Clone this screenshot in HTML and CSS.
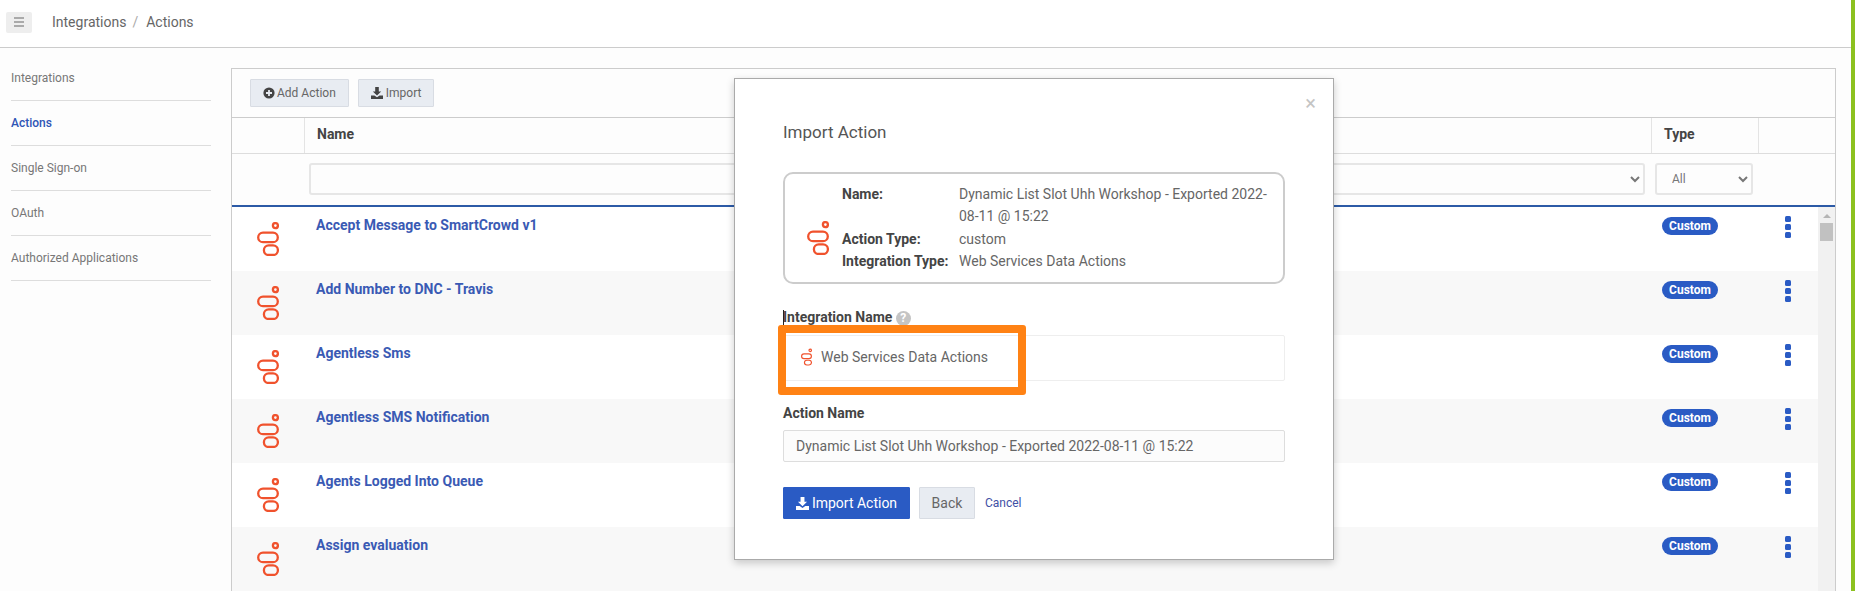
FILE: index.html
```html
<!DOCTYPE html>
<html lang="en">
<head>
    <meta charset="UTF-8">
    <title>Integrations / Actions</title>
    <link rel="stylesheet" href="styles.css">
</head>
<body>

    <svg class="defs" width="0" height="0">
        <symbol id="logo" viewBox="0 0 22 34">
            <g fill="none" stroke="#f0522d" stroke-width="2.3">
                <circle cx="18.4" cy="3.6" r="2.5"/>
                <rect x="1.2" y="10.6" width="19.6" height="9.6" rx="4.8"/>
                <rect x="6.9" y="23.4" width="14" height="9.6" rx="4.8"/>
            </g>
        </symbol>
        <symbol id="download" viewBox="0 0 12 12">
            <path d="M4.2 0h3.6v4.4h2.4L6 8.6 1.8 4.4h2.4z" fill="currentColor"/>
            <path d="M0 8.4h3.4L6 10.2l2.6-1.8H12V12H0z" fill="currentColor"/>
        </symbol>
    </svg>

    <div id="app">
        <header id="topbar">
            <button class="menu-toggle">
                <span></span><span></span><span></span>
            </button>
            <span class="crumb">Integrations</span>
            <span class="crumb-sep">/</span>
            <span class="crumb">Actions</span>
        </header>

        <div id="main">
            <nav id="sidenav">
                <a href="#">Integrations</a>
                <a href="#" class="active">Actions</a>
                <a href="#">Single Sign-on</a>
                <a href="#">OAuth</a>
                <a href="#">Authorized Applications</a>
            </nav>

            <section id="panel">
                <div class="toolbar">
                    <button class="btn-light">
                        <svg class="btn-icon" viewBox="0 0 12 12"><circle cx="6" cy="6" r="5.6" fill="currentColor"/><path d="M6 3v6M3 6h6" stroke="#e8ecf2" stroke-width="1.8"/></svg>
                        Add Action
                    </button>
                    <button class="btn-light">
                        <svg class="btn-icon"><use href="#download"/></svg>
                        Import
                    </button>
                </div>

                <div class="table-row table-head">
                    <div></div>
                    <div class="th">Name</div>
                    <div class="th">Type</div>
                    <div></div>
                </div>

                <div class="table-row table-filter">
                    <div></div>
                    <div class="filter-cell">
                        <input type="text" class="filter-input">
                        <select class="filter-select"><option></option></select>
                    </div>
                    <div class="filter-cell">
                        <select class="filter-select type-select"><option>All</option></select>
                    </div>
                    <div></div>
                </div>

                <div class="table-body">
                    <div class="rows">
                        <div class="row">
                            <svg class="row-logo"><use href="#logo"/></svg>
                            <a href="#" class="row-name">Accept Message to SmartCrowd v1</a>
                            <div><span class="badge">Custom</span></div>
                            <div class="kebab"><i></i><i></i><i></i></div>
                        </div>
                        <div class="row">
                            <svg class="row-logo"><use href="#logo"/></svg>
                            <a href="#" class="row-name">Add Number to DNC - Travis</a>
                            <div><span class="badge">Custom</span></div>
                            <div class="kebab"><i></i><i></i><i></i></div>
                        </div>
                        <div class="row">
                            <svg class="row-logo"><use href="#logo"/></svg>
                            <a href="#" class="row-name">Agentless Sms</a>
                            <div><span class="badge">Custom</span></div>
                            <div class="kebab"><i></i><i></i><i></i></div>
                        </div>
                        <div class="row">
                            <svg class="row-logo"><use href="#logo"/></svg>
                            <a href="#" class="row-name">Agentless SMS Notification</a>
                            <div><span class="badge">Custom</span></div>
                            <div class="kebab"><i></i><i></i><i></i></div>
                        </div>
                        <div class="row">
                            <svg class="row-logo"><use href="#logo"/></svg>
                            <a href="#" class="row-name">Agents Logged Into Queue</a>
                            <div><span class="badge">Custom</span></div>
                            <div class="kebab"><i></i><i></i><i></i></div>
                        </div>
                        <div class="row">
                            <svg class="row-logo"><use href="#logo"/></svg>
                            <a href="#" class="row-name">Assign evaluation</a>
                            <div><span class="badge">Custom</span></div>
                            <div class="kebab"><i></i><i></i><i></i></div>
                        </div>
                    </div>
                    <div class="scrollbar">
                        <div class="scroll-arrow"></div>
                        <div class="scroll-thumb"></div>
                    </div>
                </div>
            </section>
        </div>
    </div>

    <div id="modal">
        <span class="modal-close">&times;</span>
        <h2>Import Action</h2>

        <div class="info-box">
            <svg class="info-logo"><use href="#logo"/></svg>
            <dl class="info-list">
                <dt>Name:</dt>
                <dd>Dynamic List Slot Uhh Workshop - Exported 2022-<br>08-11 @ 15:22</dd>
                <dt>Action Type:</dt>
                <dd>custom</dd>
                <dt>Integration Type:</dt>
                <dd>Web Services Data Actions</dd>
            </dl>
        </div>

        <label class="field-label first-label"><span class="caret"></span>Integration Name <span class="help">?</span></label>
        <div class="integration-field">
            <svg class="field-logo"><use href="#logo"/></svg>
            Web Services Data Actions
            <div class="highlight"></div>
        </div>

        <label class="field-label second-label">Action Name</label>
        <input type="text" class="name-input" value="Dynamic List Slot Uhh Workshop - Exported 2022-08-11 @ 15:22">

        <div class="modal-actions">
            <button class="btn-primary">
                <svg class="btn-icon"><use href="#download"/></svg>
                Import Action
            </button>
            <button class="btn-back">Back</button>
            <a href="#" class="cancel">Cancel</a>
        </div>
    </div>

</body>
</html>
```

FILE: styles.css
```css
* {
    box-sizing: border-box;
}

html, body {
    height: 100%;
}

body {
    margin: 0;
    overflow: hidden;
    font-family: Roboto, "Liberation Sans", sans-serif;
    font-size: 14px;
    color: #444;
    background-color: #fdfdfd;
}

a {
    text-decoration: none;
}

button {
    font-family: inherit;
    cursor: pointer;
}

.defs {
    position: absolute;
}

#app {
    height: 100%;
    border-right: 4px solid #8cc11f;
    overflow: hidden;
}

/* top bar */

#topbar {
    height: 48px;
    display: flex;
    align-items: center;
    padding: 0 0 3px 6px;
    background-color: #fff;
    border-bottom: 1px solid #ccc;
}

.menu-toggle {
    width: 26px;
    height: 21px;
    padding: 0;
    margin-right: 20px;
    border: none;
    border-radius: 2px;
    background-color: #eee;
    display: flex;
    flex-direction: column;
    align-items: center;
    justify-content: center;
    gap: 2px;
}

.menu-toggle span {
    width: 10px;
    height: 2px;
    background-color: #aaa;
}

.crumb {
    color: #666;
}

.crumb-sep {
    color: #aaa;
    margin: 0 8px 0 6px;
}

/* side navigation */

#main {
    display: flex;
    align-items: flex-start;
}

#sidenav {
    width: 231px;
    flex-shrink: 0;
    padding: 8px 20px 0 11px;
    display: flex;
    flex-direction: column;
}

#sidenav a {
    height: 45px;
    line-height: 44px;
    font-size: 12px;
    color: #777;
    border-bottom: 1px solid #ddd;
}

#sidenav a.active {
    color: #2f55b5;
    font-weight: 500;
}

/* table panel */

#panel {
    width: 1605px;
    margin-top: 20px;
    border: 1px solid #ccc;
    border-bottom: none;
}

.toolbar {
    height: 49px;
    padding: 10px 0 0 18px;
    display: flex;
    align-items: flex-start;
    gap: 9px;
    border-bottom: 1px solid #ccc;
}

.btn-light {
    height: 28px;
    padding: 0 12px;
    display: flex;
    align-items: center;
    gap: 2px;
    font-size: 12px;
    color: #666;
    background-color: #e8ecf2;
    border: 1px solid #d8dce3;
    border-radius: 1px;
}

.btn-light + .btn-light {
    gap: 3px;
}

.btn-icon {
    width: 12px;
    height: 12px;
    color: #444;
}

.table-row {
    display: grid;
    grid-template-columns: 72px 1347px 108px 76px;
}

.table-head {
    height: 36px;
    border-bottom: 1px solid #ddd;
}

.th {
    padding: 0 12px;
    line-height: 33px;
    font-weight: 700;
    color: #444;
    border-left: 1px solid #e4e4e4;
}

.th:nth-child(3) {
    border-right: 1px solid #e4e4e4;
}

.table-filter {
    height: 53px;
    padding-top: 9px;
    border-bottom: 2px solid #2c5aa6;
}

.filter-cell {
    display: flex;
    padding: 0 6px 0 5px;
}

.filter-cell:nth-child(3) {
    padding: 0 6px 0 4px;
}

.filter-input, .filter-select {
    height: 32px;
    background-color: #fdfdfd;
    border: 2px solid #e6e6e6;
    border-radius: 3px;
    font-family: inherit;
    font-size: 12px;
    color: #777;
}

.filter-input {
    width: 600px;
}

.filter-select {
    flex: 1;
    min-width: 0;
}

.type-select {
    padding-left: 11px;
}

.table-body {
    display: flex;
}

.rows {
    flex: 1;
}

.row {
    height: 64px;
    display: grid;
    grid-template-columns: 72px 1347px 108px 59px;
    background-color: #fff;
}

.row:nth-child(even) {
    background-color: #f8f8f8;
}

.row-logo {
    width: 22px;
    height: 34px;
    margin: 15px 0 0 25px;
}

.row-name {
    padding: 8px 0 0 12px;
    line-height: 20px;
    font-weight: 700;
    color: #3a5ab4;
}

.row > div {
    padding-left: 11px;
}

.badge {
    display: inline-block;
    margin-top: 10px;
    width: 56px;
    height: 18px;
    line-height: 18px;
    text-align: center;
    font-size: 12px;
    font-weight: 700;
    color: #fff;
    background-color: #2a5bc4;
    border-radius: 9px;
}

.row > .kebab {
    padding: 9px 0 0 26px;
    display: flex;
    flex-direction: column;
    gap: 2px;
}

.kebab i {
    width: 6px;
    height: 6px;
    border-radius: 1.5px;
    background-color: #2a5bc4;
}

.scrollbar {
    width: 17px;
    background-color: #f1f1f1;
    padding: 0 2px;
}

.scroll-arrow {
    width: 0;
    margin: 7px auto 5px;
    border-left: 4px solid transparent;
    border-right: 4px solid transparent;
    border-bottom: 4px solid #b5b5b5;
}

.scroll-thumb {
    height: 18px;
    background-color: #c1c1c1;
}

/* import dialog */

#modal {
    position: absolute;
    left: 734px;
    top: 78px;
    width: 600px;
    height: 482px;
    padding: 41px 48px 0;
    background-color: #fff;
    border: 1px solid #aaa;
    box-shadow: 0 3px 8px rgba(0, 0, 0, 0.2);
}

.modal-close {
    position: absolute;
    top: 14px;
    right: 17px;
    font-size: 20px;
    line-height: 20px;
    color: #c4c4c4;
}

#modal h2 {
    margin: 0 0 28px;
    font-size: 17px;
    line-height: 24px;
    font-weight: 400;
    color: #555;
}

.info-box {
    height: 112px;
    padding: 9px 0 0 22px;
    display: flex;
    border: 2px solid #ccc;
    border-radius: 10px;
}

.info-logo {
    width: 22px;
    height: 34px;
    margin: 38px 13px 0 0;
    flex-shrink: 0;
}

.info-list {
    margin: 0;
    display: grid;
    grid-template-columns: 117px 1fr;
    grid-auto-rows: min-content;
    line-height: 22px;
}

.info-list dt {
    font-weight: 700;
    color: #444;
}

.info-list dd {
    margin: 0;
    color: #666;
}

.info-list dd:nth-of-type(1) {
    margin-bottom: 1px;
}

.field-label {
    display: block;
    position: relative;
    line-height: 20px;
    font-weight: 700;
    color: #444;
}

.first-label {
    margin: 23px 0 8px;
}

.second-label {
    margin: 22px 0 7px;
}

.caret {
    position: absolute;
    left: 0;
    top: 3px;
    width: 1px;
    height: 16px;
    background-color: #222;
}

.help {
    display: inline-block;
    width: 15px;
    height: 15px;
    line-height: 15px;
    text-align: center;
    font-size: 12px;
    color: #fff;
    background-color: #c4c4c4;
    border-radius: 50%;
}

.integration-field {
    position: relative;
    height: 46px;
    padding: 0 0 2px 17px;
    display: flex;
    align-items: center;
    color: #666;
    border: 1px solid #eee;
    border-radius: 2px;
}

.field-logo {
    width: 11px;
    height: 18px;
    margin-right: 9px;
}

.highlight {
    position: absolute;
    left: -6px;
    top: -11px;
    width: 248px;
    height: 70px;
    border: 8px solid #ff8214;
    border-radius: 3px;
}

.name-input {
    display: block;
    width: 100%;
    height: 32px;
    padding: 0 12px;
    font-family: inherit;
    font-size: 14px;
    color: #666;
    background-color: #fcfcfc;
    border: 1px solid #ddd;
    border-radius: 2px;
}

.modal-actions {
    margin-top: 25px;
    display: flex;
    align-items: center;
}

.btn-primary, .btn-back {
    height: 32px;
    font-size: 14px;
    border-radius: 1px;
}

.btn-primary {
    width: 127px;
    display: flex;
    align-items: center;
    justify-content: center;
    gap: 3px;
    color: #fff;
    background-color: #2a5bc4;
    border: 1px solid #2a5bc4;
}

.btn-primary .btn-icon {
    color: #fff;
    width: 13px;
    height: 13px;
}

.btn-back {
    width: 56px;
    margin: 0 10px 0 9px;
    color: #666;
    background-color: #e8ecf2;
    border: 1px solid #d8dce3;
}

.cancel {
    font-size: 12px;
    color: #3f51a5;
}
```
